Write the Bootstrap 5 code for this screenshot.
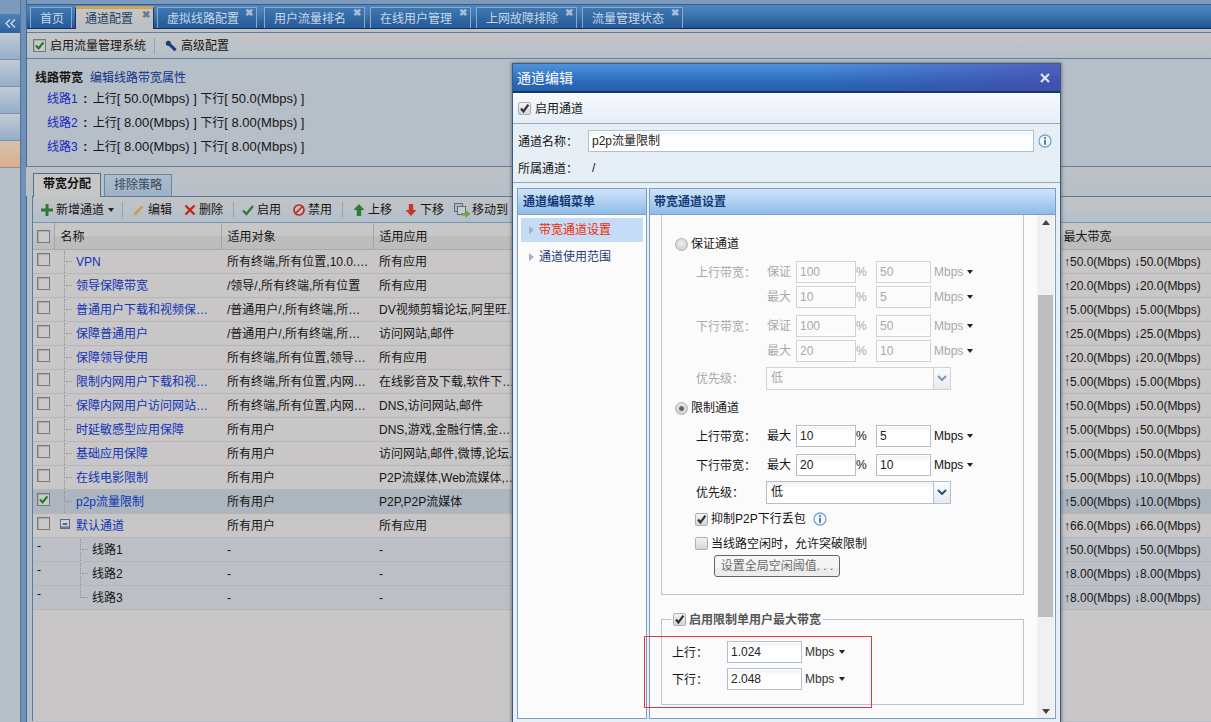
<!DOCTYPE html>
<html lang="zh-CN">
<head>
<meta charset="utf-8">
<title>通道配置</title>
<link rel="stylesheet" href="https://cdn.jsdelivr.net/npm/bootstrap@5.3.0/dist/css/bootstrap.min.css">
<style>
html,body{height:722px;overflow:hidden}
body{font:12px/16px "Liberation Sans","Noto Sans CJK SC",sans-serif;color:#151515;background:#b7bfc8}
a{text-decoration:none}
.cn{font-style:normal;font-family:"Noto Sans CJK TC",sans-serif}
.shell{height:722px;width:1211px}
.lbar{width:20px;flex:none;background:linear-gradient(#7b9abd 14px,#b7bfc8 14px);padding-top:14px}
.ltog{height:19px;background:linear-gradient(#4f7fb3,#2f639e);display:flex;align-items:center;justify-content:center}
.litem{height:27px;background:linear-gradient(#c2cbd5,#95aec9);border-bottom:1px solid #7e93aa}
.litem.on{background:linear-gradient(#d2c3b2,#dcae88)}
.lrail{width:7px;flex:none;background:#6d92b9;border-left:1px solid #577596;border-right:1px solid #4b6a8e}
.mainp{flex:1;min-width:0}
.tabstrip{height:29px;padding-top:4px;background:#7b9abd}
.tabrow{height:25px;padding:2px 0 0 3px;background:linear-gradient(#4f86bd 0,#427bb4 35%,#215390 100%);border-top:1px solid #3d5c82;border-bottom:1px solid #12305e;gap:3px;align-items:flex-end}
.ptab{height:21px;border:1px solid #8aa9cb;border-bottom:0;color:#c9d8e9;position:relative;line-height:22px;padding-left:9px;background:linear-gradient(#3f78b1,#255a98);white-space:nowrap;width:101px;margin-left:2px}
.ptab b{position:absolute;top:-1px;right:3px;font:bold 10px/12px "Liberation Sans",sans-serif;color:#a9bfd8}
.ptab.home{width:42px;margin-left:0}
.ptab.cur{height:23px;width:79px;margin-left:0;background:linear-gradient(#c7c7c4,#b8bec5);border:1px solid #17375f;border-top:3px solid #c9a35c;border-bottom:0;color:#233f66;line-height:21px;margin-bottom:-1px}
.ptab.cur b{top:0;color:#6b7b8f}
.ptab.virt{width:100px;margin-left:0}
.ptab.usr{margin-left:4px}
.gapband{height:3px;background:#bcc1c6}
.tb1{height:27px;border-top:1px solid #5f7f9f;border-bottom:1px solid #627f9c;background:linear-gradient(#c5c5c5,#b5bfc9);padding-left:6px}
.infob{height:108px;background:#b6bec7;border-bottom:1px solid #66809b;padding:11px 0 0 8px}
.infob .ln{margin:8px 0 0 12px;height:16px;white-space:nowrap}
.infob .ln.ln0{margin-top:5px}
.infob .ln a{color:#1726c4}
.infob .cln{display:inline-block;width:15px;text-align:center}
.lat{font-size:13px}
.lnk2{color:#10338a;margin-left:7px}
.tabs2{height:29px;padding:6px 0 0 7px;background:linear-gradient(#bdc1c5,#b7bfc8);gap:3px;align-items:flex-end;margin-left:-1px}
.stab{width:68px;height:22px;border:1px solid #6a87a5;border-bottom:0;background:linear-gradient(#aebccb,#9db1c8);text-align:center;line-height:21px;color:#35465a}
.stab.cur{height:24px;margin-bottom:-1px;background:#c6c6c6;color:#111;font-weight:700;border-color:#536f8e}
.gridbox{margin-left:5px;height:525px;border-left:1px solid #5c7c9e;border-top:1px solid #5a7898;background:#c8c6c6}
.tb2{height:26px;background:linear-gradient(#c3c4c5,#b3bfcb);border-bottom:1px solid #7f97ad;padding:1px 0 0 8px}
.ic{flex:none;display:block}
.tbi{gap:3px;white-space:nowrap}
.tbi.tight{gap:1px}
.sep{width:1px;height:16px;background:#8ea3b8;flex:none}
.caret-s{width:0;height:0;border:3px solid transparent;border-top:4px solid #222;border-bottom:0;display:inline-block;flex:none}
.ml8{margin-left:8px}.ml10{margin-left:10px}.ml12{margin-left:12px}.ml13{margin-left:13px}
.ckb{width:13px;height:13px;border:1px solid #777;background:#c9c9c9;flex:none;display:block;box-shadow:inset 1px 1px 1px #aaa}
.ckb svg{display:block}
.ck2{width:13px;height:13px;border:1px solid #aab0b6;border-radius:2px;background:linear-gradient(#f4f4f4,#d2d5d9);flex:none;display:block}
.ck2 svg{display:block}
table.gridt{table-layout:fixed;width:1178px;margin:0;border-collapse:collapse;font-size:12px}
.gridt th,.gridt td{padding:1px 0 0;background:transparent;color:#151515;height:24px;border:0;border-bottom:1px solid #b4b6b8;overflow:hidden;white-space:nowrap;box-shadow:none;vertical-align:middle}
.gridt thead th{height:26px;padding-top:3px;font-weight:400;background:linear-gradient(#c7c7c7,#c7c7c7 50%,#bdbdbd 50%,#bcbcbc);border-bottom:1px solid #a9a9a9;border-right:1px solid #a4a4a4;padding-left:6px}
.gridt thead th.cc{padding:2px 0 0 4px;background:linear-gradient(#c7c7c7,#bcbcbc)}
.gridt thead th.mx{padding-left:3px}
.gridt td.cc{padding:3px 0 0 4px;vertical-align:top}
.gridt td.tx{padding-left:6px;text-overflow:ellipsis}
.gridt td.bw{padding-left:4px}
.gridt tr.sel td{background:#adb6bf}
.gridt tr.sub td{background:#bcc0c6}
.gridt td.dc{vertical-align:top;padding-top:0}
.treec{height:22px}
.tl{width:12px;margin-left:10px;flex:none;align-self:stretch;border-left:1px dotted #8d9398;position:relative}
.tl::after{content:"";position:absolute;left:1px;top:10px;width:6px;border-top:1px dotted #8d9398}
.tl.end{align-self:flex-start;height:11px}
.treec a{color:#0f34b8;overflow:hidden;text-overflow:ellipsis;white-space:nowrap;display:block;max-width:150px}
.mbox{width:10px;height:10px;margin-left:6px;margin-right:6px;flex:none;margin-top:-3px}
.dash{display:block;padding-left:4px;line-height:16px}
.dlg{position:absolute;left:512px;top:63px;width:549px;height:659px;background:#e6eef6;border:1px solid #3d5a7c;border-bottom:0;box-shadow:-1px 0 3px rgba(60,70,90,.45),1px 0 3px rgba(60,70,90,.45)}
.dhead{height:29px;padding:0 10px 0 4px;background:linear-gradient(90deg,rgba(74,144,220,0) 55%,rgba(78,70,170,.65) 100%),linear-gradient(#4d93de,#2b68b8 70%,#2660ad);color:#fff;font-size:14px;border-bottom:2px solid #17375f}
.dchk{height:31px;padding-left:5px;background:linear-gradient(#f6f9fc,#e6eef6);border-bottom:1px solid #93a8bf;gap:4px;border-top:1px solid #fff}
.dform{height:59px;border-bottom:1px solid #93a8bf;padding:6px 0 0 5px}
.kv{height:22px}
.kv .k{width:70px;flex:none}
.txi{height:22px;border:1px solid #b1bfce;background:linear-gradient(#f1f1f1,#fff 35%);padding-left:3px;line-height:20px;color:#222;flex:none;box-shadow:inset 0 0 0 1px #fff}
.txi.wname{width:446px}
.panes{padding:5px 0 0 4px;gap:2px}
.pane{border:1px solid #7c9dc0;height:531px;background:#fbfbfb;overflow:hidden}
.pl{width:130px}
.pr{width:407px;position:relative}
.phd{height:26px;background:linear-gradient(#d0e4f9,#8fbbe8);border-bottom:1px solid #7fa0c3;color:#143a78;font-weight:700;padding-left:5px;line-height:27px;font-size:12px}
.pr .phd{padding-left:4px}
.mitem{height:24px;margin:3px 3px 0;padding-left:8px;gap:5px;color:#1b3d78}
.mitem.act{background:#c4dcf6;color:#f42a00}
.tri{width:0;height:0;border:4px solid transparent;border-left:5px solid #9fb2c8;border-right:0;flex:none}
.fs1{position:absolute;left:11px;top:26px;width:363px;height:380px;border:1px solid #b6c4d6;border-top:0;padding:21px 0 0 13px}
.fs2{position:absolute;left:11px;top:430px;width:363px;height:86px;border:1px solid #b6c4d6}
.sbar{position:absolute;left:387px;top:26px;width:17px;height:504px;background:#f0f0f0}
.sth{position:absolute;left:1px;top:80px;width:15px;height:322px;background:#bdbdbd}
.sup,.sdn{position:absolute;left:5px;width:0;height:0;border:4px solid transparent}
.sup{top:5px;border-bottom:5px solid #444;border-top:0}
.sdn{bottom:5px;border-top:5px solid #444;border-bottom:0}
.rad{width:13px;height:13px;border-radius:50%;border:1px solid #b0b4b8;background:radial-gradient(circle at 50% 40%,#eee,#c4c8cc);flex:none;position:relative}
.rad.on::after{content:"";position:absolute;left:3px;top:3px;width:5px;height:5px;border-radius:50%;background:#666}
.hrow{height:16px;gap:3px}
.frow{height:22px;margin-left:21px}
.frow .a{width:71px;flex:none}
.frow .b{width:29px;flex:none}
.frow .i1{width:60px}
.frow .pc{width:20px;flex:none}
.frow .i2{width:55px}
.frow .mb{margin-left:3px;width:33px;flex:none}
.off,.off .txi{color:#a9a9a9}
.off .txi{border-color:#ced3da;background:#fbfbfb}
.sel1{width:185px;height:23px;margin-left:-1px;border:1px solid #b1bfce;line-height:21px;background:linear-gradient(#f1f1f1,#fff 35%);position:relative;flex:none;padding-left:4px}
.sel1 i{position:absolute;right:0;top:0;bottom:0;width:17px;border-left:1px solid #b1bfce;background:linear-gradient(#fafbfc,#e6eaef);display:flex;align-items:center;justify-content:center}
.off .sel1{border-color:#ced3da;background:#fbfbfb}
.off .sel1 i{border-color:#ced3da}
.sel1 svg{display:block}
.t3{margin-top:3px}.t5{margin-top:5px}.t7{margin-top:7px}.t8{margin-top:8px}.t9{margin-top:9px}.t11{margin-top:11px}.t4{margin-top:4px}
.chkrow{height:16px;margin-left:20px;gap:3px}
.dbtn{width:126px;height:22px;margin-left:39px;border:1px solid #bcc0c5;border-radius:3px;background:linear-gradient(#f6f6f6,#f1f1f1 60%,#e1e1e1 60%,#e8e8e8);color:#a9a9a9;text-align:center;line-height:20px;padding:0;font-size:12px;white-space:nowrap}
.lgd{left:9px;top:-9px;background:#fbfbfb;padding:0 2px;height:17px;gap:3px;font-weight:700;color:#565656}
.r2{position:absolute;left:10px;height:22px}
.r2 .l{width:55px;flex:none}
.r2 .txi{width:75px}
.r2 .m{margin-left:3px;width:34px;flex:none;color:#333}
.redbox{position:absolute;left:644px;top:636px;width:228px;height:72px;border:1px solid #e53a3a;pointer-events:none}
</style>
</head>
<body>
<svg width="0" height="0" class="position-absolute">
<defs>
<symbol id="gchk" viewBox="0 0 11 11"><path d="M2 5.5 4.6 8.4 9.4 2.4" fill="none" stroke="#17801f" stroke-width="2.2"/></symbol>
<symbol id="bchk" viewBox="0 0 11 11"><path d="M2 5.5 4.4 8.4 9.4 1.6" fill="none" stroke="#333" stroke-width="2.2"/></symbol>
<symbol id="info" viewBox="0 0 14 14"><circle cx="7" cy="7" r="6" fill="#f2f7fc" stroke="#7fa3cc" stroke-width="1.3"/><rect x="6.1" y="3" width="1.8" height="1.8" fill="#3f72ad"/><rect x="6.1" y="5.8" width="1.8" height="5" fill="#3f72ad"/></symbol>
<symbol id="dn" viewBox="0 0 10 6"><path d="M1 1 5 5 9 1" fill="none" stroke="#24508a" stroke-width="2"/></symbol>
</defs>
</svg>
<div class="shell d-flex">
  <div class="lbar">
    <div class="ltog"><svg width="11" height="9" viewBox="0 0 11 9"><path d="M5 .5 1 4.5 5 8.5M10 .5 6 4.5 10 8.5" fill="none" stroke="#c9dcf0" stroke-width="1.4"/></svg></div>
    <div class="litem"></div><div class="litem"></div><div class="litem"></div><div class="litem"></div><div class="litem on"></div>
  </div>
  <div class="lrail"></div>
  <div class="mainp">
    <div class="tabstrip">
      <div class="tabrow d-flex">
        <div class="ptab home">首页</div>
        <div class="ptab cur">通道配置<b>✖</b></div>
        <div class="ptab virt">虚拟线路配置<b>✖</b></div>
        <div class="ptab usr">用户流量排名<b>✖</b></div>
        <div class="ptab">在线用户管理<b>✖</b></div>
        <div class="ptab">上网故障排除<b>✖</b></div>
        <div class="ptab">流量管理状态<b>✖</b></div>
      </div>
    </div>
    <div class="gapband"></div>
    <div class="tb1 d-flex align-items-center">
      <span class="ckb"><svg width="11" height="11"><use href="#gchk"/></svg></span>
      <span class="ms-1">启用流量管理系统</span>
      <span class="sep ml8"></span>
      <svg class="ic ml10" width="12" height="12" viewBox="0 0 12 12"><path d="M.6 2.6 2.8.6 5.4 1.2 6 3.8 11.6 9 9.6 11.4 4 6 1.4 5.4Z" fill="#1d3c7c"/></svg>
      <span class="ms-1">高级配置</span>
    </div>
    <div class="infob">
      <div><b>线路带宽</b><a href="#" class="lnk2">编辑线路带宽属性</a></div>
      <div class="ln ln0"><a href="#">线路1</a><b class="cln">:</b>上行<span class="lat">[ 50.0(Mbps) ]</span> 下行<span class="lat">[ 50.0(Mbps) ]</span></div>
      <div class="ln"><a href="#">线路2</a><b class="cln">:</b>上行<span class="lat">[ 8.00(Mbps) ]</span> 下行<span class="lat">[ 8.00(Mbps) ]</span></div>
      <div class="ln"><a href="#">线路3</a><b class="cln">:</b>上行<span class="lat">[ 8.00(Mbps) ]</span> 下行<span class="lat">[ 8.00(Mbps) ]</span></div>
    </div>
    <div class="tabs2 d-flex">
      <div class="stab cur">带宽分配</div>
      <div class="stab">排除策略</div>
    </div>
    <div class="gridbox">
      <div class="tb2 d-flex align-items-center">
        <span class="tbi d-flex align-items-center">
          <svg class="ic" width="12" height="12" viewBox="0 0 12 12"><path d="M4.5 0h3v4.5H12v3H7.5V12h-3V7.5H0v-3h4.5Z" fill="#2f7a35"/></svg>新增通道
        </span>
        <span class="caret-s ms-1"></span>
        <span class="sep ml8"></span>
        <span class="tbi d-flex align-items-center ml10">
          <svg class="ic" width="12" height="12" viewBox="0 0 12 12"><path d="M1 9 8.5 1.5 10.5 3.5 3 11 .5 11.5Z" fill="#cf9a52"/><path d="M0 12h7" stroke="#b9b9b9"/></svg>编辑
        </span>
        <span class="tbi d-flex align-items-center ml12">
          <svg class="ic" width="12" height="12" viewBox="0 0 12 12"><path d="M1.5 1.5 10.5 10.5M10.5 1.5 1.5 10.5" stroke="#c5261d" stroke-width="2.4"/></svg>删除
        </span>
        <span class="sep ml10"></span>
        <span class="tbi d-flex align-items-center ml8">
          <svg class="ic" width="12" height="12" viewBox="0 0 12 12"><path d="M1 6.5 4.4 10 11 2" fill="none" stroke="#2d7a35" stroke-width="2.2"/></svg>启用
        </span>
        <span class="tbi d-flex align-items-center ml12">
          <svg class="ic" width="12" height="12" viewBox="0 0 12 12"><circle cx="6" cy="6" r="5" fill="none" stroke="#bf2a22" stroke-width="1.7"/><path d="M2.5 9.5 9.5 2.5" stroke="#bf2a22" stroke-width="1.7"/></svg>禁用
        </span>
        <span class="sep ml10"></span>
        <span class="tbi d-flex align-items-center ml10">
          <svg class="ic" width="12" height="12" viewBox="0 0 12 12"><path d="M6 0 11.5 6H8.2V12H3.8V6H.5Z" fill="#2f7a35"/></svg>上移
        </span>
        <span class="tbi d-flex align-items-center ml13">
          <svg class="ic" width="12" height="12" viewBox="0 0 12 12"><path d="M6 12 11.5 6H8.2V0H3.8V6H.5Z" fill="#c5372e"/></svg>下移
        </span>
        <span class="tbi tight d-flex align-items-center ml10">
          <svg class="ic" width="17" height="15" viewBox="0 0 17 15"><rect x=".5" y=".5" width="8" height="8" fill="#aeb7c2" stroke="#5f6a78"/><rect x="3.5" y="3.5" width="8" height="8" fill="#c5ccd4" stroke="#5f6a78"/><path d="M7 10h4.500V7l5 4-5 4v-2.500H7Z" fill="#6fa04a"/></svg>移动到
        </span>
      </div>
      <table class="table gridt">
        <colgroup><col style="width:21px"><col style="width:167px"><col style="width:152px"><col style="width:146px"><col style="width:541px"><col style="width:151px"></colgroup>
        <thead>
          <tr><th class="cc"><span class="ckb"></span></th><th>名称</th><th>适用对象</th><th>适用应用</th><th></th><th class="mx border-end-0">最大带宽</th></tr>
        </thead>
        <tbody>
          <tr><td class="cc"><span class="ckb"></span></td><td><div class="treec d-flex align-items-center"><span class="tl"></span><a href="#">VPN</a></div></td><td class="tx">所有终端,所有位置,10.0.…</td><td class="tx">所有应用</td><td></td><td class="bw">↑50.0(Mbps) ↓50.0(Mbps)</td></tr>
          <tr><td class="cc"><span class="ckb"></span></td><td><div class="treec d-flex align-items-center"><span class="tl"></span><a href="#">领导保障带宽</a></div></td><td class="tx">/领导/,所有终端,所有位置</td><td class="tx">所有应用</td><td></td><td class="bw">↑20.0(Mbps) ↓20.0(Mbps)</td></tr>
          <tr><td class="cc"><span class="ckb"></span></td><td><div class="treec d-flex align-items-center"><span class="tl"></span><a href="#">普通用户下载和视频保…</a></div></td><td class="tx">/普通用户/,所有终端,所…</td><td class="tx">DV视频剪辑论坛,阿里旺.</td><td></td><td class="bw">↑5.00(Mbps) ↓5.00(Mbps)</td></tr>
          <tr><td class="cc"><span class="ckb"></span></td><td><div class="treec d-flex align-items-center"><span class="tl"></span><a href="#">保障普通用户</a></div></td><td class="tx">/普通用户/,所有终端,所…</td><td class="tx">访问网站,邮件</td><td></td><td class="bw">↑25.0(Mbps) ↓25.0(Mbps)</td></tr>
          <tr><td class="cc"><span class="ckb"></span></td><td><div class="treec d-flex align-items-center"><span class="tl"></span><a href="#">保障领导使用</a></div></td><td class="tx">所有终端,所有位置,领导…</td><td class="tx">所有应用</td><td></td><td class="bw">↑20.0(Mbps) ↓20.0(Mbps)</td></tr>
          <tr><td class="cc"><span class="ckb"></span></td><td><div class="treec d-flex align-items-center"><span class="tl"></span><a href="#">限制内网用户下载和视…</a></div></td><td class="tx">所有终端,所有位置,内网…</td><td class="tx">在线影音及下载,软件下…</td><td></td><td class="bw">↑5.00(Mbps) ↓5.00(Mbps)</td></tr>
          <tr><td class="cc"><span class="ckb"></span></td><td><div class="treec d-flex align-items-center"><span class="tl"></span><a href="#">保障内网用户访问网站…</a></div></td><td class="tx">所有终端,所有位置,内网…</td><td class="tx">DNS,访问网站,邮件</td><td></td><td class="bw">↑50.0(Mbps) ↓50.0(Mbps)</td></tr>
          <tr><td class="cc"><span class="ckb"></span></td><td><div class="treec d-flex align-items-center"><span class="tl"></span><a href="#">时延敏感型应用保障</a></div></td><td class="tx">所有用户</td><td class="tx">DNS,游戏,金融行情,金…</td><td></td><td class="bw">↑5.00(Mbps) ↓50.0(Mbps)</td></tr>
          <tr><td class="cc"><span class="ckb"></span></td><td><div class="treec d-flex align-items-center"><span class="tl"></span><a href="#">基础应用保障</a></div></td><td class="tx">所有用户</td><td class="tx">访问网站,邮件,微博,论坛.</td><td></td><td class="bw">↑5.00(Mbps) ↓50.0(Mbps)</td></tr>
          <tr><td class="cc"><span class="ckb"></span></td><td><div class="treec d-flex align-items-center"><span class="tl"></span><a href="#">在线电影限制</a></div></td><td class="tx">所有用户</td><td class="tx">P2P流媒体,Web流媒体,…</td><td></td><td class="bw">↑5.00(Mbps) ↓10.0(Mbps)</td></tr>
          <tr class="sel"><td class="cc"><span class="ckb"><svg width="11" height="11"><use href="#gchk"/></svg></span></td><td><div class="treec d-flex align-items-center"><span class="tl"></span><a href="#">p2p流量限制</a></div></td><td class="tx">所有用户</td><td class="tx">P2P,P2P流媒体</td><td></td><td class="bw">↑5.00(Mbps) ↓10.0(Mbps)</td></tr>
          <tr><td class="cc"><span class="ckb"></span></td><td><div class="treec d-flex align-items-center"><svg class="mbox" viewBox="0 0 11 11"><rect x=".5" y=".5" width="10" height="10" fill="#cdd3da" stroke="#4f6479"/><rect x="1" y="8" width="9" height="2" fill="#6f8196"/><path d="M3 5.500h5" stroke="#1c2c40" stroke-width="1.400"/></svg><a href="#">默认通道</a></div></td><td class="tx">所有用户</td><td class="tx">所有应用</td><td></td><td class="bw">↑66.0(Mbps) ↓66.0(Mbps)</td></tr>
          <tr class="sub"><td class="dc"><span class="dash">-</span></td><td><div class="treec d-flex align-items-center ps-3"><span class="tl"></span><span>线路1</span></div></td><td class="tx">-</td><td class="tx">-</td><td></td><td class="bw">↑50.0(Mbps) ↓50.0(Mbps)</td></tr>
          <tr class="sub"><td class="dc"><span class="dash">-</span></td><td><div class="treec d-flex align-items-center ps-3"><span class="tl"></span><span>线路2</span></div></td><td class="tx">-</td><td class="tx">-</td><td></td><td class="bw">↑8.00(Mbps) ↓8.00(Mbps)</td></tr>
          <tr class="sub"><td class="dc"><span class="dash">-</span></td><td><div class="treec d-flex align-items-center ps-3"><span class="tl end"></span><span>线路3</span></div></td><td class="tx">-</td><td class="tx">-</td><td></td><td class="bw">↑8.00(Mbps) ↓8.00(Mbps)</td></tr>
        </tbody>
      </table>
    </div>
  </div>
</div>

<div class="dlg">
  <div class="dhead d-flex align-items-center justify-content-between">
    <span>通道编辑</span>
    <svg width="10" height="10" viewBox="0 0 10 10"><path d="M1 1 9 9M9 1 1 9" stroke="#dfe6f5" stroke-width="2.2"/></svg>
  </div>
  <div class="dchk d-flex align-items-center">
    <span class="ck2"><svg width="11" height="11"><use href="#bchk"/></svg></span><span>启用通道</span>
  </div>
  <div class="dform">
    <div class="kv d-flex align-items-center">
      <span class="k">通道名称<i class="cn">：</i></span>
      <span class="txi wname">p2p流量限制</span>
      <svg class="ic ms-1" width="14" height="14"><use href="#info"/></svg>
    </div>
    <div class="kv d-flex align-items-center t5"><span class="k">所属通道<i class="cn">：</i></span><span class="ps-1">/</span></div>
  </div>
  <div class="panes d-flex">
    <div class="pane pl">
      <div class="phd">通道编辑菜单</div>
      <div class="mitem act d-flex align-items-center"><span class="tri"></span><span>带宽通道设置</span></div>
      <div class="mitem d-flex align-items-center"><span class="tri"></span><span>通道使用范围</span></div>
    </div>
    <div class="pane pr">
      <div class="phd">带宽通道设置</div>
      <div class="fs1">
        <div class="hrow d-flex align-items-center"><span class="rad"></span><span>保证通道</span></div>
        <div class="off">
          <div class="frow d-flex align-items-center t9"><span class="a">上行带宽<i class="cn">：</i></span><span class="b">保证</span><span class="txi i1">100</span><span class="pc">%</span><span class="txi i2">50</span><span class="mb">Mbps</span><span class="caret-s"></span></div>
          <div class="frow d-flex align-items-center t3"><span class="a"></span><span class="b">最大</span><span class="txi i1">10</span><span class="pc">%</span><span class="txi i2">5</span><span class="mb">Mbps</span><span class="caret-s"></span></div>
          <div class="frow d-flex align-items-center t7"><span class="a">下行带宽<i class="cn">：</i></span><span class="b">保证</span><span class="txi i1">100</span><span class="pc">%</span><span class="txi i2">50</span><span class="mb">Mbps</span><span class="caret-s"></span></div>
          <div class="frow d-flex align-items-center t3"><span class="a"></span><span class="b">最大</span><span class="txi i1">20</span><span class="pc">%</span><span class="txi i2">10</span><span class="mb">Mbps</span><span class="caret-s"></span></div>
          <div class="frow d-flex align-items-center t5"><span class="a">优先级<i class="cn">：</i></span><span class="sel1">低<i><svg width="10" height="6"><use href="#dn" opacity=".55"/></svg></i></span></div>
        </div>
        <div class="hrow d-flex align-items-center t11"><span class="rad on"></span><span>限制通道</span></div>
        <div class="frow d-flex align-items-center t9"><span class="a">上行带宽<i class="cn">：</i></span><span class="b">最大</span><span class="txi i1">10</span><span class="pc">%</span><span class="txi i2">5</span><span class="mb">Mbps</span><span class="caret-s"></span></div>
        <div class="frow d-flex align-items-center t7"><span class="a">下行带宽<i class="cn">：</i></span><span class="b">最大</span><span class="txi i1">20</span><span class="pc">%</span><span class="txi i2">10</span><span class="mb">Mbps</span><span class="caret-s"></span></div>
        <div class="frow d-flex align-items-center t5"><span class="a">优先级<i class="cn">：</i></span><span class="sel1">低<i><svg width="10" height="6"><use href="#dn"/></svg></i></span></div>
        <div class="chkrow d-flex align-items-center t8"><span class="ck2"><svg width="11" height="11"><use href="#bchk"/></svg></span><span>抑制P2P下行丢包</span><svg class="ic ms-1" width="14" height="14"><use href="#info"/></svg></div>
        <div class="chkrow d-flex align-items-center t8"><span class="ck2"></span><span>当线路空闲时<i class="cn">，</i>允许突破限制</span></div>
        <button type="button" class="btn dbtn d-block t4" disabled>设置全局空闲阈值. . .</button>
      </div>
      <div class="fs2">
        <div class="lgd d-flex align-items-center position-absolute"><span class="ck2"><svg width="11" height="11"><use href="#bchk"/></svg></span><span>启用限制单用户最大带宽</span></div>
        <div class="r2 d-flex align-items-center" style="top:21px"><span class="l">上行<i class="cn">：</i></span><span class="txi">1.024</span><span class="m">Mbps</span><span class="caret-s"></span></div>
        <div class="r2 d-flex align-items-center" style="top:48px"><span class="l">下行<i class="cn">：</i></span><span class="txi">2.048</span><span class="m">Mbps</span><span class="caret-s"></span></div>
      </div>
      <div class="sbar"><span class="sup"></span><span class="sth"></span><span class="sdn"></span></div>
    </div>
  </div>
</div>
<div class="redbox"></div>
</body>
</html>
